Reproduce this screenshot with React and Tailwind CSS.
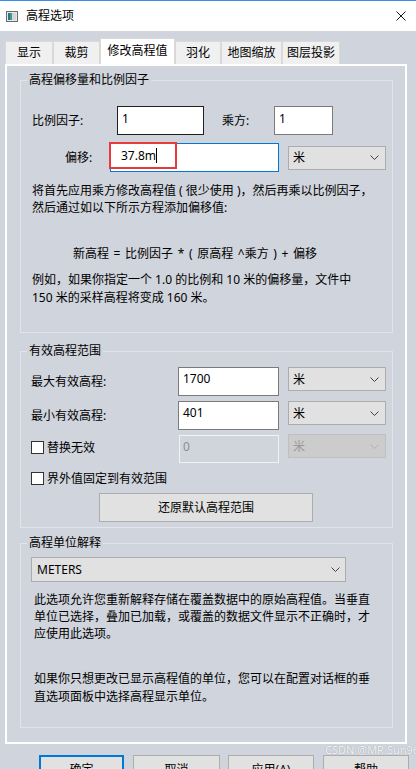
import React from "react";

const Chevron = ({ color = "#404040" }) => (
  <svg width="9" height="5" viewBox="0 0 9 5">
    <polyline points="0.5,0.5 4.5,4.5 8.5,0.5" fill="none" stroke={color} strokeWidth="1" />
  </svg>
);

const Select = ({ text = "米", disabled = false, className = "" }) => (
  <div
    className={
      (disabled
        ? "bg-[#cccccc] border border-[#bfbfbf] text-[#9a9a9a] "
        : "bg-[#e1e1e1] border border-[#adadad] text-black ") +
      "w-[98px] h-[24px] flex items-center justify-between pl-[4px] pr-[6px] " +
      className
    }
  >
    <span className="leading-[17px]">{text}</span>
    <Chevron color={disabled ? "#b0b0b0" : "#404040"} />
  </div>
);

const Checkbox = () => <div className="w-[13px] h-[13px] border border-[#333333] bg-white shrink-0" />;

const Tab = ({ label, w, active }) =>
  active ? (
    <div className={"h-[26px] bg-white border-l border-t border-r border-[#d9d9d9] flex items-center justify-center pb-[2px] " + w}>
      {label}
    </div>
  ) : (
    <div className={"h-[23px] bg-[#f0f0f0] border-l border-t border-r border-[#d9d9d9] flex items-center justify-center " + w}>
      {label}
    </div>
  );

const Legend = ({ children }) => (
  <legend className="ml-[6px] px-[2px] leading-[16px]">{children}</legend>
);

export default function App() {
  return (
    <div className="relative w-[416px] h-[769px] overflow-hidden bg-[#d0d4dc] text-[12px] text-black [font-family:'Noto_Sans','Noto_Sans_CJK_SC',sans-serif]">
      {/* Title bar */}
      <div className="h-[31px] bg-white border-t border-[#3a8ee6] flex items-center">
        <svg className="ml-[6px]" width="12" height="11" viewBox="0 0 12 11">
          <rect x="0.5" y="0.5" width="11" height="10" fill="#e8e8e8" stroke="#6b6b6b" />
          <rect x="2" y="2" width="4" height="7" fill="#3f9b8a" />
          <rect x="2" y="2" width="2" height="7" fill="#2f6f9e" />
          <rect x="6" y="2" width="4" height="7" fill="#d6d6d6" />
        </svg>
        <span className="ml-[8px] leading-[16px]">高程选项</span>
        <svg className="ml-auto mr-[10px]" width="10" height="10" viewBox="0 0 10 10">
          <path d="M0.5 0.5 L9.5 9.5 M9.5 0.5 L0.5 9.5" stroke="#1a1a1a" strokeWidth="1" />
        </svg>
      </div>

      {/* Tabs */}
      <div className="mt-[7px] h-[26px] flex items-end pl-[5px]">
        <Tab label="显示" w="w-[48px]" />
        <Tab label="裁剪" w="w-[47px]" />
        <Tab label="修改高程值" w="w-[75px]" active />
        <Tab label="羽化" w="w-[46px]" />
        <Tab label="地图缩放" w="w-[61px]" />
        <Tab label="图层投影" w="w-[58px]" />
      </div>

      {/* Panel */}
      <div className="ml-[5px] w-[402px] h-[680px] border-2 border-white flex flex-col">
        {/* Group 1 */}
        <fieldset className="mt-[6px] ml-[13px] w-[373px] border border-[#e2e4e9]">
          <Legend>高程偏移量和比例因子</Legend>
          <div className="pl-[11px] pb-[26px]">
            <div className="mt-[18px] h-[29px] flex items-center">
              <div className="w-[85px] leading-[17px]">比例因子:</div>
              <div className="w-[87px] h-[29px] bg-white border border-[#1f1f1f] pl-[4px] pt-[3px] leading-[17px]">1</div>
              <div className="ml-[18px] w-[52px] leading-[17px]">乘方:</div>
              <div className="w-[59px] h-[29px] bg-white border border-[#7a7a7a] pl-[4px] pt-[3px] leading-[17px]">1</div>
            </div>
            <div className="mt-[8px] h-[29px] flex items-center">
              <div className="ml-[33px] w-[45px] leading-[17px]">偏移:</div>
              <div className="relative w-[169px] h-[29px] bg-white border border-[#0078d7] pl-[10px] pt-[3px] leading-[17px] flex items-start">
                <span>37.8m</span>
                <span className="mt-[1px] w-[1px] h-[15px] bg-black" />
                <div className="absolute left-[-2px] top-[-2px] w-[68px] h-[27px] border-2 border-[#e83a3a]" />
              </div>
              <Select className="ml-[9px]" />
            </div>
            <div className="mt-[10px] leading-[17px] whitespace-nowrap">
              将首先应用乘方修改高程值 ( 很少使用 )，然后再乘以比例因子，
              <br />
              然后通过如以下所示方程添加偏移值:
            </div>
            <div className="mt-[29px] pl-[41px] leading-[17px] whitespace-nowrap [word-spacing:1.5px]">
              新高程 = 比例因子 * ( 原高程 ^乘方 ) + 偏移
            </div>
            <div className="mt-[9px] leading-[17.5px] whitespace-nowrap">
              例如，如果你指定一个 1.0 的比例和 10 米的偏移量，文件中
              <br />
              150 米的采样高程将变成 160 米。
            </div>
          </div>
        </fieldset>

        {/* Group 2 */}
        <fieldset className="mt-[10px] ml-[13px] w-[373px] border border-[#e2e4e9]">
          <Legend>有效高程范围</Legend>
          <div className="pl-[10px] pb-[5px]">
            <div className="mt-[8px] flex items-start">
              <div className="w-[147px] h-[29px] flex items-center leading-[17px]">最大有效高程:</div>
              <div className="w-[101px] h-[29px] bg-white border border-[#7a7a7a] pl-[4px] pt-[2px] leading-[17px]">1700</div>
              <Select className="ml-[9px]" />
            </div>
            <div className="mt-[5px] flex items-start">
              <div className="w-[147px] h-[29px] flex items-center leading-[17px]">最小有效高程:</div>
              <div className="w-[101px] h-[29px] bg-white border border-[#7a7a7a] pl-[4px] pt-[2px] leading-[17px]">401</div>
              <Select className="ml-[9px]" />
            </div>
            <div className="mt-[4px] flex items-start">
              <div className="w-[148px] h-[26px] flex items-center gap-[3px] leading-[17px]">
                <Checkbox />
                <span>替换无效</span>
              </div>
              <div className="mt-[1px] w-[100px] h-[28px] border border-[#f2f2f2] pl-[3px] pt-[2px] leading-[17px] text-[#8d8d8d]">0</div>
              <Select className="ml-[9px]" disabled />
            </div>
            <div className="mt-[6px] h-[18px] flex items-center gap-[3px] leading-[17px]">
              <Checkbox />
              <span>界外值固定到有效范围</span>
            </div>
            <div className="mt-[6px] ml-[68px] w-[214px] h-[29px] bg-[#e1e1e1] border border-[#adadad] flex items-center justify-center leading-[17px]">
              还原默认高程范围
            </div>
          </div>
        </fieldset>

        {/* Group 3 */}
        <fieldset className="mt-[7px] ml-[13px] w-[373px] border border-[#e2e4e9]">
          <Legend>高程单位解释</Legend>
          <div className="pl-[10px] pb-[22px]">
            <div className="mt-[6px] w-[315px] h-[25px] bg-[#e1e1e1] border border-[#adadad] flex items-center justify-between pl-[5px] pr-[5px]">
              <span className="leading-[17px]">METERS</span>
              <Chevron />
            </div>
            <div className="mt-[9px] pl-[3px] leading-[17px] whitespace-nowrap">
              此选项允许您重新解释存储在覆盖数据中的原始高程值。当垂直
              <br />
              单位已选择，叠加已加载，或覆盖的数据文件显示不正确时，才
              <br />
              应使用此选项。
            </div>
            <div className="mt-[28px] pl-[3px] leading-[17.5px] whitespace-nowrap">
              如果你只想更改已显示高程值的单位，您可以在配置对话框的垂
              <br />
              直选项面板中选择高程显示单位。
            </div>
          </div>
        </fieldset>
      </div>

      {/* Bottom buttons */}
      <div className="mt-[11px] flex pl-[39px]">
        <div className="w-[85px] h-[29px] bg-[#e1e1e1] border-2 border-[#0078d7] flex items-center justify-center leading-[17px]">确定</div>
        <div className="ml-[9px] w-[87px] h-[29px] bg-[#e1e1e1] border border-[#adadad] flex items-center justify-center leading-[17px]">取消</div>
        <div className="ml-[8px] w-[86px] h-[29px] bg-[#e1e1e1] border border-[#adadad] flex items-center justify-center leading-[17px]">应用(A)</div>
        <div className="ml-[9px] w-[86px] h-[29px] bg-[#e1e1e1] border border-[#adadad] flex items-center justify-center leading-[17px]">帮助</div>
      </div>

      <div className="absolute left-[325px] top-[744px] text-[11px] leading-[12px] text-[#f4f5f7] whitespace-nowrap [text-shadow:0_0_1px_#8f959e]">
        CSDN @MR.Sun961
      </div>
    </div>
  );
}
